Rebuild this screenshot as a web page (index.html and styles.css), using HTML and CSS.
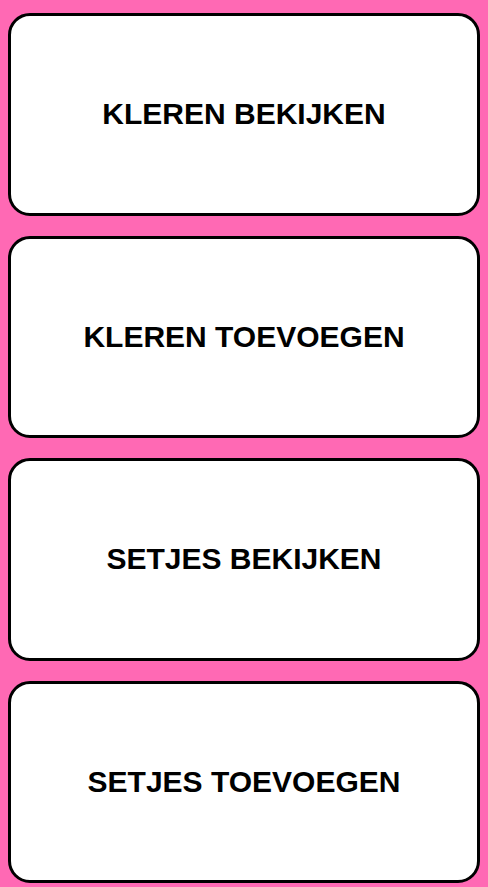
FILE: index.html
```html
<!DOCTYPE html>
<html lang="nl">
<head>
  <meta charset="UTF-8">
  <title>Kledingkast</title>
  <meta name="viewport" content="width=device-width, initial-scale=1.0">
  <link rel="stylesheet" href="styles.css">
</head>
<body>

  <!-- Menu -->
  <div class="menu">
    <a class="menu-btn" href="#">KLEREN BEKIJKEN</a>
    <a class="menu-btn" href="#">KLEREN TOEVOEGEN</a>
    <a class="menu-btn" href="#">SETJES BEKIJKEN</a>
    <a class="menu-btn" href="#">SETJES TOEVOEGEN</a>
  </div>

</body>
</html>
```

FILE: styles.css
```css
body {
  margin: 0;
  background: #ff69b4;
  font-family: "Liberation Sans", Arial, sans-serif;
}

.menu {
  display: flex;
  flex-direction: column;
  gap: 20px;
  padding: 13px 8px 0;
}

.menu-btn {
  display: flex;
  justify-content: center;
  align-items: center;
  height: 202.5px;
  box-sizing: border-box;
  background: #fff;
  border: 3px solid #000;
  border-radius: 22px;
  color: #000;
  text-decoration: none;
  font-weight: bold;
  font-size: 30px;
}
```
